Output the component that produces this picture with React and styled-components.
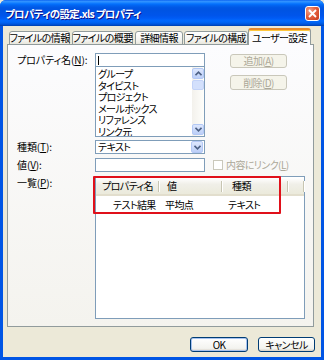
import React from "react";
import styled, { createGlobalStyle } from "styled-components";

const GlobalStyle = createGlobalStyle`
  html, body {
    margin: 0;
    padding: 0;
    background: #ece9d8;
  }
  body {
    font-family: "Noto Sans CJK JP", "Liberation Sans", sans-serif;
    font-size: 10px;
    letter-spacing: -0.6px;
    font-feature-settings: "palt";
    color: #000;
  }
`;

const Window = styled.div`
  width: 324px;
  height: 360px;
  box-sizing: border-box;
  display: flex;
  flex-direction: column;
  background: #0055e5;
  border-radius: 6px 6px 0 0;
  overflow: hidden;
`;

const TitleBar = styled.div`
  height: 26px;
  flex: none;
  display: flex;
  align-items: center;
  justify-content: space-between;
  padding: 0 4px 0 5px;
  background: linear-gradient(
    to bottom,
    #0058ee 0%,
    #3593ff 4%,
    #288eff 8%,
    #127dff 12%,
    #036ffc 16%,
    #0262ee 22%,
    #0057e5 30%,
    #0054e3 40%,
    #0055eb 60%,
    #005bf5 70%,
    #026afe 80%,
    #0062ef 88%,
    #0052d6 94%,
    #0040ab 100%
  );
`;

const Title = styled.span`
  color: #fff;
  font-weight: bold;
  font-size: 10.5px;
  letter-spacing: -0.7px;
  text-shadow: 1px 1px 0 #0f1089;
`;

const CloseBtn = styled.div`
  width: 15px;
  height: 15px;
  box-sizing: border-box;
  border: 1px solid #fff;
  border-radius: 3px;
  background: radial-gradient(circle at 30% 30%, #f0a48e 0%, #e4613f 45%, #c4381b 100%);
  display: flex;
  align-items: center;
  justify-content: center;
`;

const Body = styled.div`
  flex: 1;
  margin: 0 3px 3px;
  padding-top: 2px;
  background: #ece9d8;
  display: flex;
  flex-direction: column;
`;

const TabStrip = styled.div`
  display: flex;
  align-items: flex-end;
  height: 17px;
  padding-left: 6px;
  margin-bottom: -1px;
  position: relative;
  z-index: 1;
`;

const Tab = styled.div`
  width: ${(p) => p.$w}px;
  margin-right: ${(p) => p.$gap}px;
  height: ${(p) => (p.$active ? 17 : 14)}px;
  box-sizing: border-box;
  border: 1px solid #919b9c;
  border-bottom: ${(p) => (p.$active ? "none" : "1px solid #919b9c")};
  border-top: ${(p) => (p.$active ? "2px solid #e68b2c" : "1px solid #919b9c")};
  border-radius: 3px 3px 0 0;
  background: ${(p) =>
    p.$active ? "#fcfcfe" : "linear-gradient(#fff, #f3f3ef 70%, #e8e6dc)"};
  display: flex;
  align-items: center;
  justify-content: center;
  white-space: nowrap;
  line-height: 12px;
  box-shadow: ${(p) => (p.$active ? "inset 0 1px 0 #ffc73c" : "none")};
`;

const Panel = styled.div`
  height: 283px;
  margin: 0 7px 0 4px;
  box-sizing: border-box;
  border: 1px solid #919b9c;
  background: linear-gradient(#fcfcfe, #f4f3ee);
  padding: 8px 0 0 9px;
  display: flex;
  flex-direction: column;
`;

const Row = styled.div`
  display: flex;
  align-items: flex-start;
  margin-top: ${(p) => p.$top || 0}px;
`;

const Label = styled.div`
  width: 78px;
  flex: none;
  line-height: 14px;
  white-space: nowrap;
  letter-spacing: -0.1px;
`;

const FieldCol = styled.div`
  width: 110px;
  display: flex;
  flex-direction: column;
`;

const TextBox = styled.div`
  height: 14px;
  width: 110px;
  box-sizing: border-box;
  border: 1px solid #7f9db9;
  background: #fff;
  position: relative;
  line-height: 12px;
  padding-left: 2px;
  display: flex;
  align-items: center;
  ${(p) =>
    p.$caret &&
    `&::after {
      content: "";
      position: absolute;
      left: 2px;
      top: 2px;
      width: 1px;
      height: 9px;
      background: #000;
    }`}
`;

const ListBox = styled.div`
  height: 70px;
  box-sizing: border-box;
  border: 1px solid #7f9db9;
  border-top: none;
  background: #fff;
  display: flex;
  overflow: hidden;
`;

const Items = styled.div`
  flex: 1;
  padding: 1px 0 0 2px;
  line-height: 11.5px;
  white-space: nowrap;
`;

const ScrollBar = styled.div`
  width: 12px;
  display: flex;
  flex-direction: column;
  background: linear-gradient(to right, #f3f1ec, #fefefb);
  padding: 1px 0;
`;

const ArrowBox = styled.div`
  width: 12px;
  height: ${(p) => p.$h || 11}px;
  box-sizing: border-box;
  border: 1px solid #b3c8f5;
  border-radius: 2px;
  background: linear-gradient(#dde7fd, #bccff8);
  display: flex;
  align-items: center;
  justify-content: center;
  flex: none;
`;

const Thumb = styled.div`
  height: 10px;
  box-sizing: border-box;
  border: 1px solid #c3d3f8;
  border-radius: 2px;
  background: #d3e0fc;
  margin-top: 1px;
`;

const Track = styled.div`
  flex: 1;
`;

const Combo = styled(TextBox)`
  justify-content: space-between;
  padding-right: 1px;
`;

const SideButtons = styled.div`
  margin-left: 25px;
  margin-top: 1px;
  display: flex;
  flex-direction: column;
  gap: 7px;
`;

const Button = styled.div`
  width: ${(p) => p.$w}px;
  height: ${(p) => p.$h || 15}px;
  box-sizing: border-box;
  border: 1px solid ${(p) => (p.$disabled ? "#c9c7ba" : "#003c74")};
  border-radius: 3px;
  background: ${(p) =>
    p.$disabled ? "#f5f4ea" : "linear-gradient(#fff, #f3f3ef 80%, #d6d0c5)"};
  color: ${(p) => (p.$disabled ? "#aca899" : "#000")};
  box-shadow: ${(p) => (p.$default ? "inset 0 0 0 1px #a6c2f0" : "none")};
  display: flex;
  align-items: center;
  justify-content: center;
  line-height: 12px;
`;

const CheckWrap = styled.div`
  margin-left: 8px;
  display: flex;
  align-items: center;
  gap: 3px;
  color: #aca899;
  line-height: 14px;
`;

const CheckBox = styled.span`
  width: 10px;
  height: 10px;
  box-sizing: border-box;
  border: 1px solid #cac8bb;
  background: #fff;
`;

const ListWrap = styled.div`
  position: relative;
  width: 210px;
  height: 143px;
  box-sizing: border-box;
  border: 1px solid #7f9db9;
  background: #fff;
`;

const Header = styled.div`
  display: flex;
  height: 16px;
  margin-top: 1px;
  background: linear-gradient(#fff, #f0efe8 40%, #ebeadb);
  border-bottom: 2px solid #e2decd;
`;

const HeadCell = styled.div`
  width: ${(p) => p.$w}px;
  flex: ${(p) => (p.$w ? "none" : 1)};
  box-sizing: border-box;
  padding-left: ${(p) => p.$pad}px;
  line-height: 16px;
  white-space: nowrap;
  position: relative;
  &::after {
    content: "";
    position: absolute;
    right: 0;
    top: 3px;
    bottom: 2px;
    width: 1px;
    background: #c7c5b2;
    box-shadow: 1px 0 0 #fff;
  }
`;

const DataRow = styled.div`
  display: flex;
  height: 14px;
  margin-top: 2px;
`;

const Cell = styled.div`
  width: ${(p) => p.$w}px;
  box-sizing: border-box;
  padding-left: ${(p) => p.$pad}px;
  line-height: 14px;
  white-space: nowrap;
`;

const Highlight = styled.div`
  position: absolute;
  left: -3px;
  top: -1px;
  width: 188px;
  height: 38px;
  box-sizing: border-box;
  border: 2px solid #e0101a;
  border-radius: 1px;
  pointer-events: none;
`;

const Footer = styled.div`
  display: flex;
  justify-content: flex-end;
  gap: 10px;
  padding: 10px 6px 0 0;
`;

const Chevron = ({ up }) => (
  <svg width="7" height="5" viewBox="0 0 7 5">
    <polyline
      points={up ? "0.5,4.2 3.5,1.2 6.5,4.2" : "0.5,0.8 3.5,3.8 6.5,0.8"}
      fill="none"
      stroke="#4d6185"
      strokeWidth="1.6"
    />
  </svg>
);

const U = styled.span`
  text-decoration: underline;
`;

const tabs = [
  { label: "ファイルの情報", w: 61, gap: 2 },
  { label: "ファイルの概要", w: 61, gap: 2 },
  { label: "詳細情報", w: 48, gap: 1 },
  { label: "ファイルの構成", w: 64, gap: 0 },
  { label: "ユーザー設定", w: 63, gap: 0, active: true },
];

const names = ["グループ", "タイピスト", "プロジェクト", "メールボックス", "リファレンス", "リンク元"];

export default function App() {
  return (
    <>
      <GlobalStyle />
      <Window>
        <TitleBar>
          <Title>プロパティの設定.xls プロパティ</Title>
          <CloseBtn>
            <svg width="9" height="9" viewBox="0 0 9 9">
              <path d="M1 1 L8 8 M8 1 L1 8" stroke="#fff" strokeWidth="1.8" />
            </svg>
          </CloseBtn>
        </TitleBar>
        <Body>
          <TabStrip>
            {tabs.map((t) => (
              <Tab key={t.label} $w={t.w} $gap={t.gap} $active={t.active}>
                {t.label}
              </Tab>
            ))}
          </TabStrip>
          <Panel>
            <Row>
              <Label>
                プロパティ名(<U>N</U>):
              </Label>
              <FieldCol>
                <TextBox $caret />
                <ListBox>
                  <Items>
                    {names.map((n) => (
                      <div key={n}>{n}</div>
                    ))}
                  </Items>
                  <ScrollBar>
                    <ArrowBox>
                      <Chevron up />
                    </ArrowBox>
                    <Thumb />
                    <Track />
                    <ArrowBox>
                      <Chevron />
                    </ArrowBox>
                  </ScrollBar>
                </ListBox>
              </FieldCol>
              <SideButtons>
                <Button $w={57} $h={14} $disabled>
                  追加(<U>A</U>)
                </Button>
                <Button $w={57} $h={15} $disabled>
                  削除(<U>D</U>)
                </Button>
              </SideButtons>
            </Row>
            <Row $top={3}>
              <Label>
                種類(<U>T</U>):
              </Label>
              <Combo>
                <span>テキスト</span>
                <ArrowBox $h={12}>
                  <Chevron />
                </ArrowBox>
              </Combo>
            </Row>
            <Row $top={4}>
              <Label>
                値(<U>V</U>):
              </Label>
              <TextBox />
              <CheckWrap>
                <CheckBox />
                <span>
                  内容にリンク(<U>L</U>)
                </span>
              </CheckWrap>
            </Row>
            <Row $top={4}>
              <Label>
                一覧(<U>P</U>):
              </Label>
              <ListWrap>
                <Header>
                  <HeadCell $w={63} $pad={6}>プロパティ名</HeadCell>
                  <HeadCell $w={63} $pad={8}>値</HeadCell>
                  <HeadCell $w={66} $pad={10}>種類</HeadCell>
                  <HeadCell $pad={0} />
                </Header>
                <DataRow>
                  <Cell $w={63} $pad={17}>テスト結果</Cell>
                  <Cell $w={63} $pad={6}>平均点</Cell>
                  <Cell $w={66} $pad={6}>テキスト</Cell>
                </DataRow>
                <Highlight />
              </ListWrap>
            </Row>
          </Panel>
          <Footer>
            <Button $w={58} $default>
              OK
            </Button>
            <Button $w={57}>キャンセル</Button>
          </Footer>
        </Body>
      </Window>
    </>
  );
}
